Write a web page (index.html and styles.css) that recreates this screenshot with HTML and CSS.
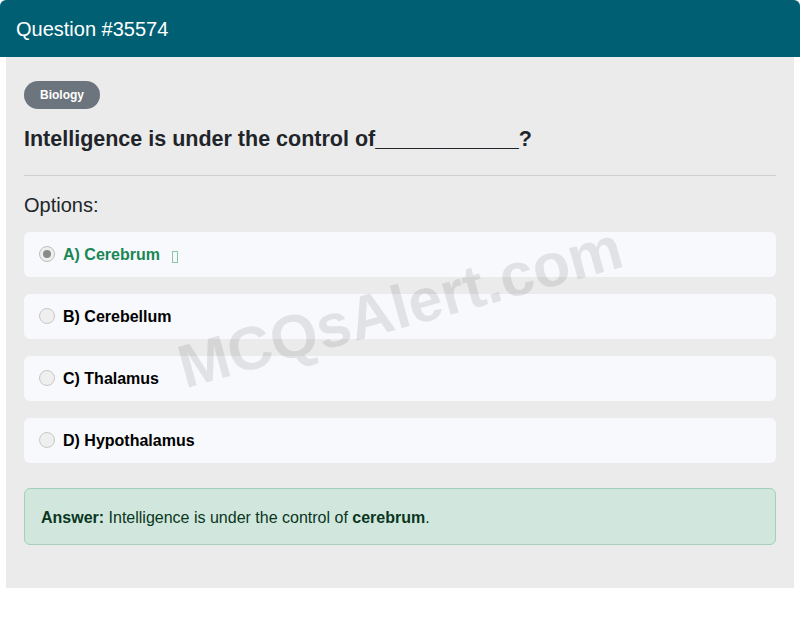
FILE: index.html
```html
<!DOCTYPE html>
<html lang="en">
<head>
<meta charset="utf-8">
<title>Question #35574</title>
<link rel="stylesheet" href="styles.css">
</head>
<body>
<div class="card">
  <div class="card-header">Question #35574</div>
  <div class="card-body">
    <span class="badge">Biology</span>
    <h2 class="question">Intelligence is under the control of____________?</h2>
    <hr class="divider">
    <h3 class="options-title">Options:</h3>
    <div class="options">
      <div class="option correct"><span class="radio checked"></span><span class="label">A) Cerebrum</span><span class="tofu"></span></div>
      <div class="option"><span class="radio"></span><span class="label">B) Cerebellum</span></div>
      <div class="option"><span class="radio"></span><span class="label">C) Thalamus</span></div>
      <div class="option"><span class="radio"></span><span class="label">D) Hypothalamus</span></div>
      <div class="watermark">MCQsAlert.com</div>
    </div>
    <div class="answer"><strong>Answer:</strong> Intelligence is under the control of <strong>cerebrum</strong>.</div>
  </div>
</div>
</body>
</html>
```

FILE: styles.css
```css
html, body {
  margin: 0;
  padding: 0;
  background: #ffffff;
}
body {
  font-family: "Liberation Sans", Arial, sans-serif;
  color: #212529;
}
.card {
  width: 800px;
}
.card-header {
  height: 57px;
  background: #005f73;
  color: #ffffff;
  font-size: 20px;
  line-height: 57px;
  padding: 1px 0 0 16px;
  border-radius: 6px 6px 0 0;
  box-sizing: border-box;
}
.card-body {
  margin: 0 6px;
  background: #ebebeb;
  padding: 24px 18px 42px;
  height: 531px;
  box-sizing: border-box;
}
.badge {
  display: inline-block;
  background: #6c757d;
  color: #ffffff;
  font-size: 12px;
  font-weight: bold;
  height: 28px;
  line-height: 29px;
  padding: 0 16px;
  border-radius: 14px;
}
.question {
  margin: 14px 0 0;
  font-size: 21.5px;
  font-weight: bold;
  line-height: 32px;
  color: #212529;
}
.divider {
  margin: 20px 0 0;
  border: 0;
  border-top: 1px solid #d0d0d0;
  height: 0;
}
.options-title {
  margin: 16px 0 0;
  font-size: 20px;
  font-weight: normal;
  line-height: 26px;
  color: #212529;
}
.options {
  position: relative;
  margin-top: 14px;
  display: flex;
  flex-direction: column;
  gap: 17px;
}
.option {
  height: 45px;
  background: #f8f9fc;
  border-radius: 6px;
  display: flex;
  align-items: center;
  padding-left: 15px;
  font-size: 16px;
  font-weight: bold;
  color: #000000;
}
.option.correct {
  color: #198754;
}
.radio {
  width: 16px;
  height: 16px;
  box-sizing: border-box;
  border: 1px solid #c8c8c8;
  border-radius: 50%;
  background: #efefef;
  margin-right: 8px;
  flex: none;
  position: relative;
  top: -1px;
}
.radio.checked {
  border-color: #bdbdbd;
}
.radio.checked::after {
  content: "";
  position: absolute;
  left: 3px;
  top: 3px;
  width: 8px;
  height: 8px;
  border-radius: 50%;
  background: #8a8a8a;
}
.tofu {
  display: inline-block;
  width: 4px;
  height: 10px;
  border: 1px solid #8cc4a8;
  margin-left: 12px;
  position: relative;
  top: 2px;
}
.watermark {
  position: absolute;
  left: 0;
  right: 0;
  top: 40px;
  text-align: center;
  font-size: 61px;
  font-weight: bold;
  color: rgba(0, 0, 0, 0.09);
  transform: rotate(-15.5deg);
  pointer-events: none;
  line-height: 70px;
}
.answer {
  margin-top: 25px;
  background: #d1e7dd;
  border: 1px solid #a3cfbb;
  border-radius: 6px;
  height: 57px;
  box-sizing: border-box;
  padding: 0 16px;
  line-height: 57px;
  font-size: 16px;
  color: #0a3622;
}
```
